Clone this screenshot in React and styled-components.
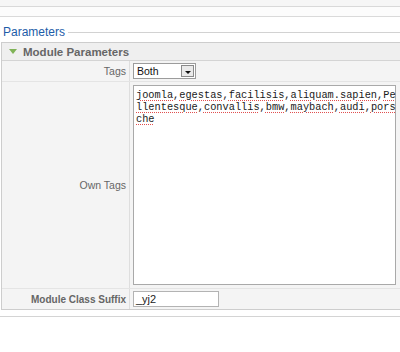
import React from "react";
import styled, { createGlobalStyle } from "styled-components";

const GlobalStyle = createGlobalStyle`
  html, body {
    margin: 0;
    padding: 0;
    background: #fff;
  }
  body {
    font-family: "Liberation Sans", Arial, sans-serif;
  }
`;

const tags = [
  "joomla",
  "egestas",
  "facilisis",
  "aliquam.sapien",
  "Pellentesque",
  "convallis",
  "bmw",
  "maybach",
  "audi",
  "porsche",
];

const App = () => {
  return (
    <Page>
      <GlobalStyle />
      <TopBar />
      <SubBar />
      <LegendRow>
        <LegendText>Parameters</LegendText>
        <LegendLine />
      </LegendRow>
      <Panel>
        <PanelHeader>
          <Arrow />
          <HeaderText>Module Parameters</HeaderText>
        </PanelHeader>
        <Row>
          <Label>Tags</Label>
          <Value>
            <Select>
              <SelectText>Both</SelectText>
              <SelectButton>
                <Caret />
              </SelectButton>
            </Select>
          </Value>
        </Row>
        <Row>
          <Label>Own Tags</Label>
          <Value pad="3px 3px">
            <TextArea>
              <TextBody>
                {tags.map((t, i) => (
                  <React.Fragment key={t}>
                    <Word>{t}</Word>
                    {i < tags.length - 1 ? "," : ""}
                  </React.Fragment>
                ))}
              </TextBody>
            </TextArea>
          </Value>
        </Row>
        <Row last>
          <Label bold>Module Class Suffix</Label>
          <Value>
            <Input>_yj2</Input>
          </Value>
        </Row>
      </Panel>
      <BottomLine />
    </Page>
  );
};

const Page = styled.div`
  width: 400px;
  height: 352px;
  overflow: hidden;
  background: #fff;
`;

const TopBar = styled.div`
  height: 6px;
  background: #f6f6f6;
  border-bottom: 1px solid #d9d9d9;
`;

const SubBar = styled.div`
  height: 9px;
  background: #fcfcfc;
  border-bottom: 1px solid #dadada;
`;

const LegendRow = styled.div`
  display: flex;
  align-items: center;
  gap: 3px;
  height: 14px;
  margin-top: 8px;
  padding-left: 3px;
`;

const LegendText = styled.span`
  font-size: 12px;
  color: #1d5ca8;
  line-height: 14px;
`;

const LegendLine = styled.div`
  flex: 1;
  height: 1px;
  background: #d2d2d2;
`;

const Panel = styled.div`
  width: 410px;
  margin: 3px 0 0 1px;
  border: 1px solid #cdcdcd;
  background: #f4f4f4;
`;

const PanelHeader = styled.div`
  display: flex;
  align-items: center;
  gap: 6px;
  height: 17px;
  padding-left: 7px;
  background: #efefef;
  border-bottom: 1px solid #d4d4d4;
`;

const Arrow = styled.div`
  width: 0;
  height: 0;
  border-left: 4px solid transparent;
  border-right: 4px solid transparent;
  border-top: 5px solid #80b357;
`;

const HeaderText = styled.span`
  font-size: 11.5px;
  font-weight: bold;
  color: #666;
`;

const Row = styled.div`
  display: grid;
  grid-template-columns: 128px 1fr;
  border-bottom: ${(p) => (p.last ? "none" : "1px solid #e4e4e4")};
`;

const Label = styled.div`
  display: flex;
  align-items: center;
  justify-content: flex-end;
  padding-right: 3px;
  font-size: ${(p) => (p.bold ? "10px" : "10.5px")};
  font-weight: ${(p) => (p.bold ? "bold" : "normal")};
  color: #666;
  border-right: 1px solid #dedede;
`;

const Value = styled.div`
  padding: ${(p) => p.pad || "2px 3px"};
`;

const Select = styled.div`
  display: flex;
  align-items: center;
  justify-content: space-between;
  width: 63px;
  height: 16px;
  box-sizing: border-box;
  border: 1px solid #9c9c9c;
  background: #fff;
  padding: 0 1px 0 3px;
`;

const SelectText = styled.span`
  font-size: 10.5px;
  color: #111;
`;

const SelectButton = styled.div`
  display: flex;
  align-items: center;
  justify-content: center;
  width: 13px;
  height: 12px;
  box-sizing: border-box;
  border: 1px solid #8a8a8a;
  background: #eaeaea;
`;

const Caret = styled.div`
  width: 0;
  height: 0;
  margin-top: 2px;
  border-left: 3px solid transparent;
  border-right: 3px solid transparent;
  border-top: 3px solid #111;
`;

const TextArea = styled.div`
  width: 263px;
  height: 200px;
  box-sizing: border-box;
  border: 1px solid #a9a9a9;
  background: #fff;
  padding: 3px 1px 0 2px;
  font-family: "Liberation Mono", "Courier New", monospace;
  font-size: 10.3px;
  line-height: 12px;
  color: #1a1a1a;
`;

const TextBody = styled.div`
  width: 42.5ch;
  word-break: break-all;
`;

const Word = styled.span`
  text-decoration: underline dotted #e05050;
  text-underline-offset: 2px;
`;

const Input = styled.div`
  width: 86px;
  height: 16px;
  box-sizing: border-box;
  border: 1px solid #b3b3b3;
  background: #fff;
  padding: 0 2px;
  font-size: 11px;
  line-height: 14px;
  color: #222;
`;

const BottomLine = styled.div`
  height: 1px;
  margin-top: 6px;
  background: #d4d4d4;
`;

export default App;
